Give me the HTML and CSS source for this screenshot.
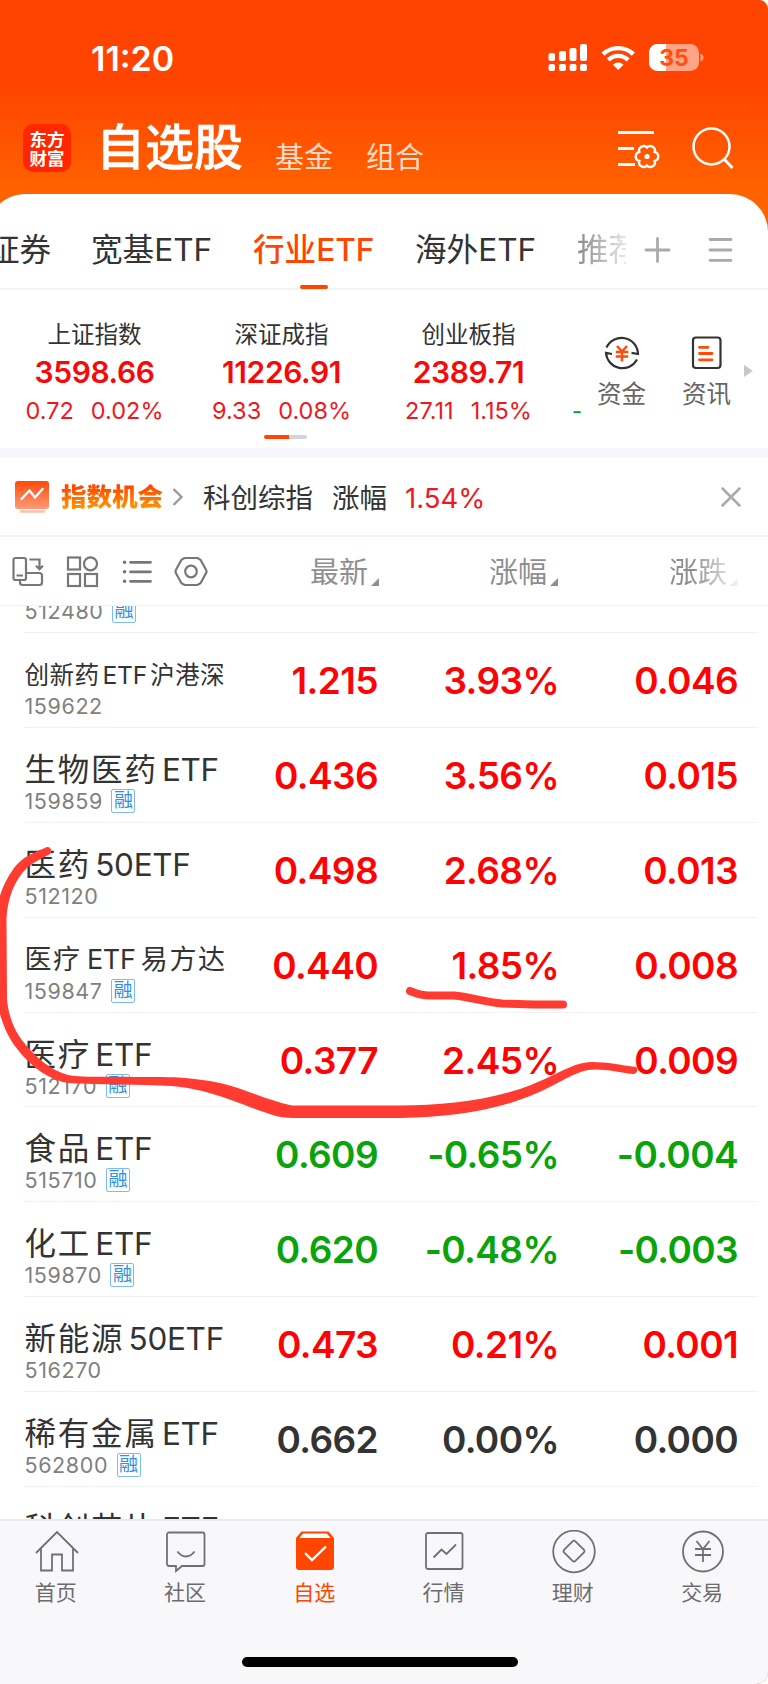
FILE: index.html
```
<!DOCTYPE html>
<html lang="zh-CN">
<head>
    <meta charset="UTF-8">
    <meta name="viewport" content="width=device-width, initial-scale=1.0">
    <title>自选股</title>
    <link rel="stylesheet" href="styles.css">
</head>
<body>
    <div class="screen">
        <header class="header">
            <div class="status">
                <span class="status-time">11:20</span>
                <svg class="status-icons" width="156" height="28" viewBox="0 0 156 28" fill="#fff">
                    <rect x="0.5" y="9" width="6.5" height="8" rx="2"/>
                    <rect x="11" y="7" width="7" height="10" rx="2"/>
                    <rect x="21.5" y="4" width="7" height="13" rx="2"/>
                    <rect x="32" y="0" width="7" height="17" rx="2"/>
                    <rect x="0.5" y="20" width="6.5" height="7" rx="2"/>
                    <rect x="11" y="20" width="7" height="7" rx="2"/>
                    <rect x="21.5" y="20" width="7" height="7" rx="2"/>
                    <rect x="32" y="20" width="7" height="7" rx="2"/>
                    <g fill="none" stroke="#fff" stroke-width="4.4">
                        <path d="M55 10.2a22 22 0 0 1 30.4 0"/>
                        <path d="M60.3 16a14 14 0 0 1 19.8 0"/>
                    </g>
                    <path d="M70.2 26l-5.3-5.3a7.8 7.8 0 0 1 10.6 0z"/>
                    <rect x="101" y="0" width="50" height="27" rx="8.5" opacity="0.52"/>
                    <path d="M118 0h-8.5a8.5 8.5 0 0 0-8.5 8.5v10a8.5 8.5 0 0 0 8.5 8.5h8.5z"/>
                    <path d="M152.5 9.5q3 1 3 4t-3 4z" opacity="0.52"/>
                    <text class="battery-text" x="126" y="21.5" text-anchor="middle">35</text>
                </svg>
            </div>
            <div class="title-bar">
                <div class="logo"><span>东方</span><span>财富</span></div>
                <h1 class="title">自选股</h1>
                <a class="title-link">基金</a>
                <a class="title-link">组合</a>
                <svg class="title-icons" width="118" height="44" viewBox="0 0 118 44" fill="none" stroke="#fff">
                    <path d="M1 6.5h36M1 22.500h16M1 38.500h17" stroke-width="3"/>
                    <path d="M7.5-4.35C12.5-4.5 12.5 4.5 7.5 4.35C10.15 8.57 2.35 13.1 0 8.7C-2.35 13.1-10.15 8.57-7.5 4.35C-12.5 4.5-12.5-4.5-7.5-4.35C-10.15-8.57-2.35-13.1 0-8.7C2.35-13.1 10.15-8.57 7.5-4.35Z" stroke-width="2.4" stroke-linejoin="round" transform="translate(30 30.5)"/>
                    <circle cx="30" cy="30.5" r="2.6" fill="#fff" stroke="none"/>
                    <circle cx="94.5" cy="20.5" r="18" stroke-width="2.5"/>
                    <path d="M106.5 32.5l9 9.5" stroke-width="3"/>
                </svg>
            </div>
        </header>

        <main class="sheet">
            <nav class="tabs">
                <span class="tab tab-cut">证券</span>
                <span class="tab">宽基ETF</span>
                <span class="tab tab-active">行业ETF</span>
                <span class="tab">海外ETF</span>
                <span class="tab tab-fade">推荐</span>
                <svg class="tabs-icons" width="90" height="26" viewBox="0 0 90 26" stroke="#aaa" stroke-width="2.8" stroke-linecap="round">
                    <path d="M2 13h23M13.5 1.5v23M66 2.5h21M66 13h21M66 23.3h21"/>
                </svg>
            </nav>

            <section class="indices">
                <div class="index">
                    <span class="index-name">上证指数</span>
                    <b class="index-value">3598.66</b>
                    <span class="index-change"><i>0.72</i><i>0.02%</i></span>
                </div>
                <div class="index">
                    <span class="index-name">深证成指</span>
                    <b class="index-value">11226.91</b>
                    <span class="index-change"><i>9.33</i><i>0.08%</i></span>
                    <span class="pager"></span>
                </div>
                <div class="index">
                    <span class="index-name">创业板指</span>
                    <b class="index-value">2389.71</b>
                    <span class="index-change"><i>27.11</i><i>1.15%</i></span>
                </div>
                <span class="index-next">-</span>
                <div class="shortcut">
                    <svg width="36" height="36" viewBox="0 0 36 36" fill="none" stroke="#333" stroke-width="2.2">
                        <path d="M2.5 12.5A16.5 16.5 0 0 1 34 19l-6.5-1.2M33 24.5A16.5 16.5 0 0 1 2 17.8l6 1.2"/>
                        <path d="M13 11l5 5.5 5-5.5M11.8 17h12.5M11.8 21.5h12.5M18 16.5v10" stroke="#ff4a08" stroke-width="2.5"/>
                    </svg>
                    <span>资金</span>
                </div>
                <div class="shortcut">
                    <svg width="36" height="36" viewBox="0 0 36 36" fill="none" stroke="#333" stroke-width="2.2">
                        <rect x="4" y="2.5" width="27.5" height="30.5" rx="3"/>
                        <path d="M10.5 12.3h8.5M10.5 18.5h12.5M10.5 24.8h12.5" stroke="#ff4a08" stroke-width="2.8" stroke-linecap="round"/>
                    </svg>
                    <span>资讯</span>
                </div>
                <span class="more-arrow"></span>
            </section>

            <section class="chance">
                <svg width="34" height="34" viewBox="0 0 34 34" fill="none">
                    <defs>
                        <linearGradient id="chance-bg" x1="0" y1="0" x2="0" y2="1">
                            <stop offset="0" stop-color="#ff4a08"/>
                            <stop offset="1" stop-color="#ff9b78"/>
                        </linearGradient>
                    </defs>
                    <rect y="1" width="34" height="28" rx="3" fill="url(#chance-bg)"/>
                    <path d="M6.5 19l8-8.500 5.500 7 7.500-8.500" stroke="#fff" stroke-width="2.4" stroke-linecap="round"/>
                    <path d="M6 31.5h23" stroke="#ffc0a8" stroke-width="2.4" stroke-linecap="round"/>
                </svg>
                <b class="chance-title">指数机会</b>
                <svg class="chance-arrow" width="12" height="18" viewBox="0 0 12 18" fill="none" stroke="#999" stroke-width="2.4">
                    <path d="M1.5 1l8 8-8 8"/>
                </svg>
                <span class="chance-name">科创综指</span>
                <span class="chance-label">涨幅</span>
                <span class="chance-value">1.54%</span>
                <svg class="chance-close" width="20" height="20" viewBox="0 0 20 20" stroke="#aaa" stroke-width="2.5" stroke-linecap="round">
                    <path d="M1.5 1.5l17 17M18.5 1.5l-17 17"/>
                </svg>
            </section>

            <div class="columns">
                <svg class="tools" width="196" height="32" viewBox="0 0 196 32" fill="none" stroke="#777" stroke-width="2.2">
                    <rect x="1.5" y="2" width="12.5" height="22" rx="2"/>
                    <path d="M4.5 19.5h6.5M17.5 3.5h10v8M24 9.8l3.5 3.4 3.5-3.4M14 17h13.5a2.5 2.5 0 0 1 2.5 2.5v7a2.5 2.5 0 0 1-2.5 2.5h-17a2.5 2.5 0 0 1-2.5-2.5v-3"/>
                    <rect x="56" y="1.5" width="12" height="12"/>
                    <circle cx="78.5" cy="7.8" r="6.5"/>
                    <rect x="56" y="18" width="12" height="12"/>
                    <rect x="73" y="18" width="12" height="12"/>
                    <path d="M118.500 6.3h20M118.500 15.8h20M118.500 25.3h20" stroke-width="2.8" stroke-linecap="round"/>
                    <path d="M112.5 6.3h.1M112.5 15.8h.1M112.5 25.3h.1" stroke-width="3.6" stroke-linecap="round"/>
                    <path d="M172.5 2h13l3 1.8 5.5 10q1 1.7 0 3.4l-5.5 10-3 1.8h-13l-3-1.8-5.5-10q-1-1.7 0-3.4l5.5-10z"/>
                    <circle cx="179" cy="15.5" r="5.8"/>
                </svg>
                <span class="column">最新</span>
                <span class="column">涨幅</span>
                <span class="column column-fade">涨跌</span>
            </div>

            <div class="list"></div>
        </main>

        <!-- hand-drawn marks over the list -->
        <svg class="marks" width="768" height="400" viewBox="0 840 768 400" fill="#ff3b32">
            <path d="M47 847C35 852 22 857 14 868C4 882-1 895-3 910L-3 1000C0 1020 8 1038 18 1050C32 1068 50 1080 68 1083C100 1085 140 1084 172 1086C215 1090 240 1105 276 1116C284 1118 292 1118 300 1118L400 1118C450 1117 490 1112 530 1096C555 1086 572 1073 588 1070C602 1068 618 1072 633 1074A4 4 0 0 0 636 1067C620 1065 608 1062 592 1062C572 1062 555 1077 520 1089C480 1102 440 1105 400 1105.5L292 1105.5C265 1100 240 1086 210 1081C180 1076 160 1077 135 1077C110 1076 85 1078 68 1075C50 1070 36 1057 26 1045C15 1033 9 1018 7 1000L6.5 920C7 900 14 880 27 868C35 861 43 858 50 854A4 4 0 0 0 47 847Z"/>
            <path d="M410 991C418 994 422 996 430 995.5L454 995.5C470 997 485 1002 502 1003.5C520 1004 530 1004 537 1004.5L563 1004.5" fill="none" stroke="#ff3b32" stroke-width="8" stroke-linecap="round" stroke-linejoin="round"/>
        </svg>

        <footer class="tabbar">
            <a class="tabbar-item">
                <svg width="44" height="44" viewBox="0 0 44 44"><path d="M1 23L22 2l21 21M6 18.5v22h11v-16h10v16h11v-22"/></svg>
                首页
            </a>
            <a class="tabbar-item">
                <svg width="44" height="44" viewBox="0 0 44 44"><path d="M5 2.5h33.500a2 2 0 0 1 2 2V34a2 2 0 0 1-2 2H18l-6 5v-5H5a2 2 0 0 1-2-2V4.500a2 2 0 0 1 2-2zM13.500 21.500q3.500 5 8.500 5t8.500-5"/></svg>
                社区
            </a>
            <a class="tabbar-item tabbar-active">
                <svg width="44" height="44" viewBox="0 0 44 44">
                    <path class="box" d="M8.5 1.5h27L41 8v29a3 3 0 0 1-3 3H6a3 3 0 0 1-3-3V8z"/>
                    <path class="lid" d="M10 3.5h24l3.5 4.5h-31z"/>
                    <path class="check" d="M12 23l7 7L33 16.5"/>
                </svg>
                自选
            </a>
            <a class="tabbar-item">
                <svg width="44" height="44" viewBox="0 0 44 44"><path d="M5 3h32.500a2 2 0 0 1 2 2v32a2 2 0 0 1-2 2H5a2 2 0 0 1-2-2V5a2 2 0 0 1 2-2zM10.500 27.500l8-8 5 4.500L33 14.500"/></svg>
                行情
            </a>
            <a class="tabbar-item">
                <svg width="44" height="44" viewBox="0 0 44 44"><circle cx="22" cy="21.5" r="20.8"/><path d="M20.6 11.3q1.4-1.3 2.8 0l8.6 8.5q1.2 1.3 0 2.6l-8.6 8.4q-1.4 1.3-2.8 0l-8.6-8.4q-1.2-1.3 0-2.6z"/></svg>
                理财
            </a>
            <a class="tabbar-item">
                <svg width="44" height="44" viewBox="0 0 44 44"><circle cx="22" cy="21.5" r="20"/><path d="M15.500 11L22 19l6.500-8M14 19h16M14 25h16M22 19v13"/></svg>
                交易
            </a>
            <span class="home-indicator"></span>
        </footer>
    </div>
<script>
    let list = document.querySelector(".list");
    // 名称, 代码, 融资标记, 最新, 涨幅, 涨跌, 名称字号
    let rows = [
        ["半导体 ETF", "512480", true, "", "", "", ""],
        ["创新药 ETF 沪港深", "159622", false, "1.215", "3.93%", "0.046", "name-small"],
        ["生物医药 ETF", "159859", true, "0.436", "3.56%", "0.015", ""],
        ["医药 50ETF", "512120", false, "0.498", "2.68%", "0.013", ""],
        ["医疗 ETF 易方达", "159847", true, "0.440", "1.85%", "0.008", "name-middle"],
        ["医疗 ETF", "512170", true, "0.377", "2.45%", "0.009", ""],
        ["食品 ETF", "515710", true, "0.609", "-0.65%", "-0.004", ""],
        ["化工 ETF", "159870", true, "0.620", "-0.48%", "-0.003", ""],
        ["新能源 50ETF", "516270", false, "0.473", "0.21%", "0.001", ""],
        ["稀有金属 ETF", "562800", true, "0.662", "0.00%", "0.000", ""],
        ["科创芯片 ETF", "", false, "", "", "", ""]
    ];
    let getColor = (rate) => {
        let value = parseFloat(rate);
        if(value > 0)
            return "up";
        return value < 0 ? "down" : "flat";
    }
    for(let [name, code, margin, price, rate, diff, size] of rows){
        let title = name.replace(/[0-9A-Z]+/, '<span class="latin">$&</span>');
        list.innerHTML += `<div class="row ${getColor(rate)}">
            <div class="stock">
                <div class="name ${size}">${title}</div>
                <div class="code">${code}${margin ? '<span class="badge">融</span>' : ''}</div>
            </div>
            <b class="price">${price}</b><b class="rate">${rate}</b><b class="diff">${diff}</b>
        </div>`;
    }
</script>
</body>
</html>
```
FILE: styles.css
```
* {
    margin: 0;
    padding: 0;
    box-sizing: border-box;
}
body {
    font-family: Inter, "Noto Sans CJK SC", sans-serif;
    background-color: #fff;
    color: #333;
    width: 768px;
}
svg {
    flex: none;
}
.screen {
    position: relative;
    width: 768px;
    height: 1684px;
    overflow: hidden;
    display: flex;
    flex-direction: column;
    border-radius: 0 9px 12px 0;
    background: linear-gradient(#ff4300 80px, #ff6200 190px);
}

/* 顶部 */
.header {
    height: 194px;
    flex: none;
    color: #fff;
}
.status {
    height: 116px;
    padding: 0 64px 0 91px;
    display: flex;
    align-items: center;
    justify-content: space-between;
}
.status-time {
    font-size: 34px;
    font-weight: 600;
    padding-top: 1px;
}
.battery-text {
    font-size: 23px;
    font-weight: 700;
    fill: #ff4e10;
}
.title-bar {
    display: flex;
    align-items: center;
    height: 64px;
    padding: 0 33px 0 23px;
}
.logo {
    width: 48px;
    height: 48px;
    border-radius: 10px;
    background-color: #ff2600;
    font-family: "Noto Sans CJK SC", sans-serif;
    font-size: 17.5px;
    font-weight: 700;
    line-height: 19px;
    display: flex;
    flex-direction: column;
    align-items: center;
    justify-content: center;
}
.title {
    font-size: 49px;
    font-weight: 500;
    -webkit-text-stroke: 0.5px #fff;
    line-height: 60px;
    margin-left: 25px;
    margin-right: 3px;
}
.title-link {
    font-size: 29px;
    line-height: 40px;
    color: rgba(255, 255, 255, 0.8);
    padding-top: 20px;
    margin-left: 29px;
}
.title-link + .title-link {
    margin-left: 33px;
}
.title-icons {
    margin-left: auto;
}

/* 分组 */
.sheet {
    flex: 1;
    min-height: 0;
    display: flex;
    flex-direction: column;
    margin-left: -13px;
    padding-left: 13px;
    background-color: #fff;
    border-radius: 38px 38px 0 0;
    overflow: hidden;
}
.tabs {
    height: 96px;
    flex: none;
    display: flex;
    align-items: center;
    padding-top: 17px;
    margin-left: -13px;
    border-bottom: 2px solid #f3f3f4;
    white-space: nowrap;
}
.tab {
    font-size: 31.6px;
    line-height: 76px;
    width: 120px;
    margin-right: 42px;
}
.tab-cut {
    width: 63px;
    margin-left: 1px;
    margin-right: 40px;
}
.tab-active {
    color: #ff4500;
    font-weight: 500;
    position: relative;
}
.tab-active::after {
    content: '';
    position: absolute;
    left: 47px;
    bottom: -1px;
    width: 28px;
    height: 4px;
    border-radius: 2px;
    background-color: #ff4500;
}
.tab-fade {
    width: 49px;
    margin-right: 18px;
    overflow: hidden;
    background: linear-gradient(90deg, #888, #e8e8e8);
    background-clip: text;
    color: transparent;
}

/* 指数 */
.indices {
    height: 168px;
    flex: none;
    display: flex;
    padding-top: 30px;
    border-bottom: 10px solid #f6f7fa;
}
.index {
    width: 187px;
    flex: none;
    display: flex;
    flex-direction: column;
    align-items: center;
}
.index:first-child {
    margin-left: 1px;
}
.index-name {
    font-size: 23.5px;
    line-height: 29px;
}
.index-value {
    font-size: 30px;
    font-weight: 600;
    line-height: 46px;
    color: #f60909;
    letter-spacing: -0.4px;
}
.index-change {
    display: flex;
    gap: 17px;
    font-size: 23.5px;
    line-height: 31px;
    color: #f01820;
}
.index-change i {
    font-style: normal;
}
.pager {
    width: 43px;
    height: 4px;
    border-radius: 2px;
    margin-top: 9px;
    margin-left: 8px;
    background: linear-gradient(90deg, #ff4500 25px, #d3d3da 25px);
}
.index-next {
    color: #0a9f18;
    font-size: 22px;
    line-height: 32px;
    margin-top: 75px;
    margin-left: 10px;
    width: 7px;
}
.shortcut {
    width: 85px;
    flex: none;
    padding-top: 15px;
    display: flex;
    flex-direction: column;
    align-items: center;
    font-size: 24.5px;
    line-height: 46px;
    color: #666;
}
.more-arrow {
    border: 6px solid transparent;
    border-left: 9px solid #c8c8c8;
    border-right: 0;
    align-self: flex-start;
    margin-top: 45px;
    margin-left: -5px;
}

/* 指数机会 */
.chance {
    height: 79px;
    flex: none;
    display: flex;
    align-items: center;
    padding: 0 27px 0 15px;
    border-bottom: 2px solid #f3f3f4;
    font-size: 27.5px;
    line-height: 40px;
}
.chance span {
    padding-top: 2px;
}
.chance-title {
    font-size: 25.5px;
    font-weight: 900;
    margin-left: 12px;
    background: linear-gradient(#ff4a00 25%, #ff9800 80%);
    background-clip: text;
    color: transparent;
}
.chance-arrow {
    margin-left: 9px;
}
.chance-name {
    margin-left: 19px;
}
.chance-label {
    margin-left: 19px;
}
.chance-value {
    color: #f01820;
    margin-left: 18px;
}
.chance-close {
    margin-left: auto;
}

/* 表头 */
.columns {
    height: 69px;
    flex: none;
    display: grid;
    grid-template-columns: 379px 179px 180px;
    align-items: center;
    border-bottom: 1px solid #f3f3f4;
    font-size: 29px;
    line-height: 42px;
    color: #8f8f92;
}
.tools {
    grid-area: 1 / 1;
    margin-left: 12px;
    margin-top: 1px;
}
.column {
    grid-row: 1;
    justify-self: end;
    display: flex;
    align-items: flex-end;
    gap: 3px;
    padding-top: 3px;
}
.column:nth-of-type(1) {
    grid-column: 1;
}
.column::after {
    content: '';
    border-bottom: 8px solid #8f8f92;
    border-left: 8px solid transparent;
    margin-bottom: 8px;
}
.column-fade {
    -webkit-mask-image: linear-gradient(90deg, #000 35%, rgba(0, 0, 0, 0.1));
    mask-image: linear-gradient(90deg, #000 35%, rgba(0, 0, 0, 0.1));
}

/* 自选列表 */
.list {
    flex: 1;
    min-height: 0;
    display: flex;
    flex-direction: column;
    justify-content: flex-end;
    overflow: hidden;
    margin-bottom: -62.8px;
}
.row {
    height: 94.88px;
    flex: none;
    margin-left: 24px;
    margin-right: 10px;
    display: grid;
    grid-template-columns: 354px 181px 179px;
    border-bottom: 1px solid #f2f2f3;
}
.row b {
    grid-row: 1;
    font-size: 37px;
    font-weight: 600;
    line-height: 96px;
    text-align: right;
    letter-spacing: -0.6px;
}
.stock {
    grid-area: 1 / 1;
    padding-left: 0.5px;
}
.price {
    grid-column: 1;
}
.rate {
    grid-column: 2;
}
.diff {
    grid-column: 3;
}
.up b {
    color: #fd0404;
}
.down b {
    color: #0aa30a;
}
.name {
    font-size: 31.5px;
    line-height: 40px;
    height: 40px;
    margin-top: 22px;
    letter-spacing: 1.8px;
    word-spacing: -6.5px;
    white-space: nowrap;
}
.latin {
    letter-spacing: -0.3px;
}
.name-small {
    font-size: 24.6px;
    letter-spacing: 0.4px;
    word-spacing: -4.2px;
}
.name-middle {
    font-size: 27px;
    letter-spacing: 1.6px;
    word-spacing: -4px;
}
.code {
    display: flex;
    align-items: center;
    gap: 8.5px;
    height: 22px;
    font-size: 21.5px;
    color: #808080;
    letter-spacing: 0.6px;
}
.badge {
    width: 24px;
    height: 24px;
    border: 1.5px solid #7dbcf0;
    border-radius: 2px;
    font-size: 19px;
    line-height: 21px;
    letter-spacing: 0;
    text-align: center;
    color: #2b90e6;
}
.marks {
    position: absolute;
    left: 0;
    top: 840px;
}

/* 底部导航 */
.tabbar {
    height: 165px;
    flex: none;
    z-index: 1;
    display: grid;
    grid-template-columns: repeat(6, 129.3px);
    grid-template-rows: 135px 30px;
    background-color: #f8f8fb;
    border-top: 2px solid #e9e9ee;
    margin-left: -9px;
}
.tabbar-item {
    display: flex;
    flex-direction: column;
    align-items: center;
    padding-top: 9px;
    font-size: 21px;
    line-height: 37px;
    color: #6c6c6f;
}
.tabbar-item svg {
    fill: none;
    stroke: #707073;
    stroke-width: 1.8px;
    margin-left: 2px;
}
.tabbar-active {
    color: #ff4500;
}
.tabbar-active .box {
    fill: #ff4500;
    stroke: none;
}
.tabbar-active .lid {
    fill: #fff;
    stroke: none;
}
.tabbar-active .check {
    stroke: #fff;
    stroke-width: 2.4px;
}
.home-indicator {
    grid-column: 1 / -1;
    width: 276px;
    height: 10px;
    border-radius: 5px;
    margin-left: 251px;
    margin-top: 1px;
    background-color: #000;
}
```
